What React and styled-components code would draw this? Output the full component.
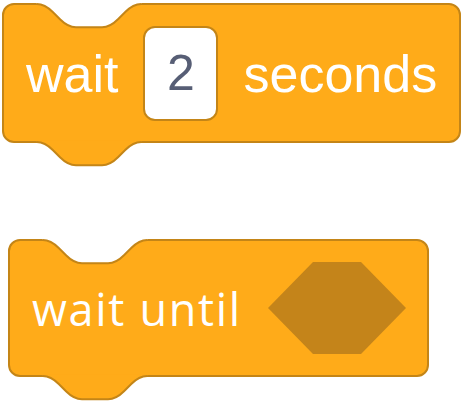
import React from 'react';
import styled, {createGlobalStyle} from 'styled-components';

const SCALE = 2.9;
const ORANGE = '#FFAB19';
const EDGE = '#C48517';

const GlobalStyle = createGlobalStyle`
    html, body {
        margin: 0;
        background: #fff;
    }
`;

const Page = styled.div`
    display: flex;
    flex-direction: column;
    align-items: flex-start;
    gap: 96px;
    box-sizing: border-box;
    min-height: 404px;
    padding: 3px 0 40px 2px;
`;

const Block = styled.div`
    position: relative;
    display: inline-flex;
    align-items: center;
    box-sizing: border-box;
    height: ${props => props.$height}px;
    margin-left: ${props => props.$indent || 0}px;
    padding: 0 ${props => props.$padRight}px 0 ${props => props.$padLeft}px;
    gap: ${props => props.$gap}px;
    background: ${ORANGE};
    border: 2px solid ${EDGE};
    border-radius: 12px;
`;

const Label = styled.span`
    font-family: ${props => props.$font};
    font-size: ${props => props.$size}px;
    letter-spacing: ${props => props.$spacing || 0}px;
    color: #fff;
    line-height: 1;
    white-space: nowrap;
    margin-top: ${props => props.$shift || 0}px;
`;

const NumberInput = styled.div`
    display: flex;
    align-items: center;
    justify-content: center;
    box-sizing: border-box;
    width: 75px;
    height: 95px;
    background: #fff;
    border: 2px solid ${EDGE};
    border-radius: 12px;
    font-family: "Liberation Sans", Arial, sans-serif;
    font-size: 50px;
    color: #575E75;
`;

const Notch = styled.svg`
    position: absolute;
    left: -2px;
    top: -2px;
    overflow: visible;
`;

const Tab = styled.svg`
    position: absolute;
    left: -2px;
    top: calc(100% + 1px);
    overflow: visible;
`;

// the puzzle notch, in block units (scaled up by SCALE)
const notchCurve = 'M12,0 c2.5,0 4,1.25 5.5,2.75 l2.5,2.5 c1.5,1.5 3,2.75 5.5,2.75 h9 c2.5,0 4,-1.25 5.5,-2.75 l2.5,-2.5 c1.5,-1.5 3,-2.75 5.5,-2.75';

const Connectors = () => (
    <>
        <Notch width="150" height="30">
            <g transform={`translate(0,1) scale(${SCALE})`}>
                <path d={notchCurve + ' V-1 H12 Z'} fill="#fff" />
                <path d={notchCurve} fill="none" stroke={EDGE} strokeWidth={2 / SCALE} />
            </g>
        </Notch>
        <Tab width="150" height="30">
            <g transform={`scale(${SCALE})`}>
                <path d={notchCurve + ' V-0.6 H12 Z'} fill={ORANGE} />
                <path d={notchCurve} fill="none" stroke={EDGE} strokeWidth={2 / SCALE} />
            </g>
        </Tab>
    </>
);

const EmptyBoolean = () => (
    <svg width="138" height="92" viewBox="0 0 138 92">
        <polygon points="45,0 93,0 138,46 93,92 45,92 0,46" fill="#C4841A" />
    </svg>
);

export default function App() {
    return (
        <>
            <GlobalStyle />
            <Page>
                <Block $height={140} $padLeft={22} $padRight={22} $gap={25}>
                    <Connectors />
                    <Label $font={'"Liberation Sans", Arial, sans-serif'} $size={52} $shift={1}>wait</Label>
                    <NumberInput>2</NumberInput>
                    <Label $font={'"Liberation Sans", Arial, sans-serif'} $size={52} $shift={1}>seconds</Label>
                </Block>
                <Block $height={138} $indent={6} $padLeft={22} $padRight={21} $gap={26}>
                    <Connectors />
                    <Label $font={'"Open Sans", sans-serif'} $size={45} $spacing={1.7}>wait until</Label>
                    <EmptyBoolean />
                </Block>
            </Page>
        </>
    );
}
